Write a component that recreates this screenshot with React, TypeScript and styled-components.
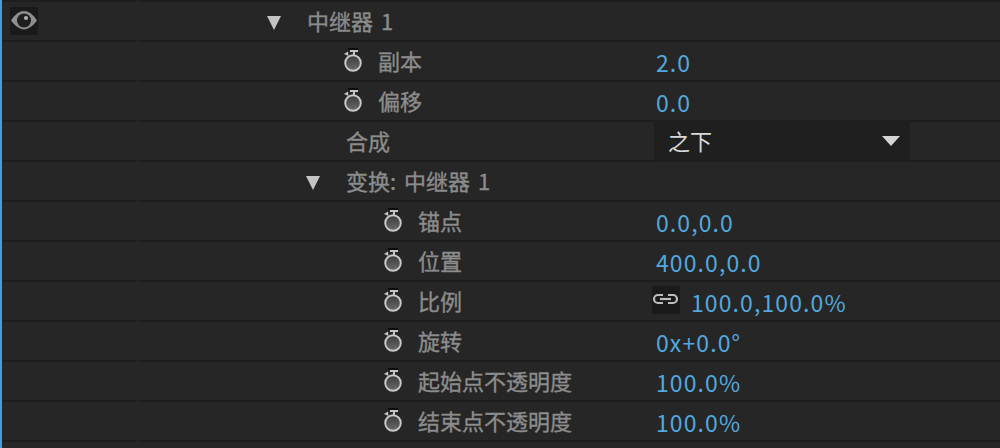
import React from "react";
import styled, { createGlobalStyle } from "styled-components";

const Global = createGlobalStyle`
  html, body { margin: 0; padding: 0; background: #262626; }
  body { width: 1000px; height: 448px; overflow: hidden; }
`;

const Panel = styled.div`
  width: 1000px;
  height: 448px;
  overflow: hidden;
  box-sizing: border-box;
  border-left: 2px solid #4a9ad4;
  background: #262626;
  font-family: "Noto Sans CJK SC", sans-serif;
  font-size: 22px;
`;

const Row = styled.div<{ $h?: number }>`
  display: grid;
  grid-template-columns: 135px 1fr;
  column-gap: 2px;
  height: ${(p) => p.$h ?? 40}px;
`;

const Cell = styled.div`
  display: flex;
  align-items: center;
  min-width: 0;
  box-sizing: border-box;
  border-bottom: 2px solid #1e1e1e;
`;

const LeadCell = styled(Cell)`
  padding-left: 8px;
`;

const MainCell = styled(Cell)`
  display: grid;
  grid-template-columns: 517px 1fr;
  align-items: center;
`;

const NameArea = styled.div<{ $indent: number }>`
  display: flex;
  align-items: center;
  padding-left: ${(p) => p.$indent}px;
  height: 38px;
`;

const Marker = styled.span<{ $w: number }>`
  display: inline-flex;
  width: ${(p) => p.$w}px;
  flex: none;
  align-items: center;
`;

const Label = styled.span`
  color: #8c8c8c;
  -webkit-text-stroke: 0.35px #8c8c8c;
  white-space: nowrap;
  word-spacing: 3px;
  line-height: 36px;
  height: 36px;
  margin-top: -3px;
`;

const Value = styled.span`
  display: flex;
  align-items: center;
  color: #52a8de;
  font-size: 23px;
  white-space: nowrap;
  letter-spacing: 1.1px;
  padding-top: 2px;
  height: 38px;
  box-sizing: border-box;
`;

const IconBox = styled.span<{ $s: number }>`
  display: inline-flex;
  flex: none;
  width: ${(p) => p.$s}px;
  height: ${(p) => p.$s}px;
  background: #1a1a1a;
`;

const LinkBox = styled(IconBox)`
  margin: -5px 11px 0 -4px;
`;

const Select = styled.div`
  display: flex;
  align-items: center;
  justify-content: space-between;
  box-sizing: border-box;
  width: 256px;
  height: 41px;
  margin: -2px 0 -1px -2px;
  padding: 0 10px 2px 14px;
  background: #1f1f1f;
  color: #d8d8d8;
`;

const Triangle = styled.span<{ $w: number; $h: number; $c: string; $y?: number }>`
  display: inline-block;
  flex: none;
  width: 0;
  height: 0;
  margin-top: ${(p) => p.$y ?? 0}px;
  border-left: ${(p) => p.$w / 2}px solid transparent;
  border-right: ${(p) => p.$w / 2}px solid transparent;
  border-top: ${(p) => p.$h}px solid ${(p) => p.$c};
`;

const Eye = () => (
  <IconBox $s={28}>
    <svg width="28" height="28" viewBox="0 0 28 28">
      <path d="M1 13.5 C5 7 10 4 14 4 C18 4 23 7 27 13.5 C23 19 18 22.5 14 22.5 C10 22.5 5 19 1 13.5 Z" fill="#8f8f8f" />
      <circle cx="14" cy="13.5" r="7" fill="#1f1f1f" />
      <circle cx="16" cy="11" r="2" fill="#b4b4b4" />
    </svg>
  </IconBox>
);

const Stopwatch = () => (
  <svg width="20" height="24" viewBox="0 0 20 24" style={{ marginTop: -2 }}>
    <defs>
      <linearGradient id="dial" x1="0" y1="0" x2="0" y2="1">
        <stop offset="0" stopColor="#3c3c3c" />
        <stop offset="1" stopColor="#6a6a6a" />
      </linearGradient>
    </defs>
    <rect x="5" y="0" width="10" height="2" fill="#0c0c0c" />
    <rect x="7" y="2" width="8" height="2" fill="#c4c4c4" />
    <rect x="10" y="3" width="2" height="5" fill="#c4c4c4" />
    <path d="M1 6 L5 3.5 L5.5 8 Z" fill="#c4c4c4" />
    <circle cx="10" cy="15" r="7.8" fill="url(#dial)" stroke="#c8c8c8" strokeWidth="1.9" />
  </svg>
);

const LinkIcon = () => (
  <LinkBox $s={28}>
    <svg width="28" height="28" viewBox="0 0 28 28">
      <g fill="none" stroke="#bdbdbd" strokeWidth="2.2">
        <path d="M11 9 H6 A4 4 0 0 0 6 17 H11" />
        <path d="M16 9 H21 A4 4 0 0 1 21 17 H16" />
        <path d="M8 13 H19" />
      </g>
    </svg>
  </LinkBox>
);

type Item = {
  indent: number;
  label: string;
  marker?: "open" | "watch";
  value?: string;
  link?: boolean;
  select?: string;
  eye?: boolean;
};

const items: Item[] = [
  { indent: 128, label: "中继器 1", marker: "open", eye: true },
  { indent: 204, label: "副本", marker: "watch", value: "2.0" },
  { indent: 204, label: "偏移", marker: "watch", value: "0.0" },
  { indent: 207, label: "合成", select: "之下" },
  { indent: 167, label: "变换: 中继器 1", marker: "open" },
  { indent: 244, label: "锚点", marker: "watch", value: "0.0,0.0" },
  { indent: 244, label: "位置", marker: "watch", value: "400.0,0.0" },
  { indent: 244, label: "比例", marker: "watch", value: "100.0,100.0%", link: true },
  { indent: 244, label: "旋转", marker: "watch", value: "0x+0.0°" },
  { indent: 244, label: "起始点不透明度", marker: "watch", value: "100.0%" },
  { indent: 244, label: "结束点不透明度", marker: "watch", value: "100.0%" },
];

export default function App() {
  return (
    <Panel>
      <Global />
      <Row $h={2}>
        <Cell />
        <Cell />
      </Row>
      {items.map((it) => (
        <Row key={it.label}>
          <LeadCell>{it.eye && <Eye />}</LeadCell>
          <MainCell>
            <NameArea $indent={it.indent}>
              {it.marker === "open" && (
                <Marker $w={40}>
                  <Triangle $w={15} $h={14} $c="#c4c4c4" $y={4} />
                </Marker>
              )}
              {it.marker === "watch" && (
                <Marker $w={35}>
                  <Stopwatch />
                </Marker>
              )}
              <Label>{it.label}</Label>
            </NameArea>
            {it.select ? (
              <Select>
                {it.select}
                <Triangle $w={18} $h={10} $c="#d4d4d4" $y={2} />
              </Select>
            ) : (
              it.value && (
                <Value>
                  {it.link && <LinkIcon />}
                  {it.value}
                </Value>
              )
            )}
          </MainCell>
        </Row>
      ))}
    </Panel>
  );
}
